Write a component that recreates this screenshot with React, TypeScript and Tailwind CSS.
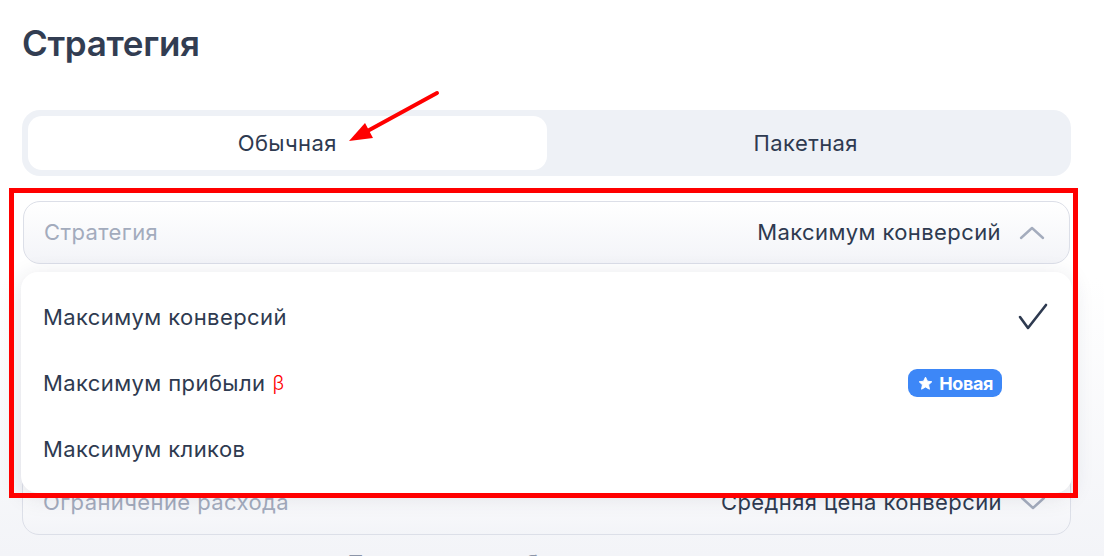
import React from "react";

const font = { fontFamily: "Inter, 'Noto Sans', sans-serif" };

function ChevronUp({ down = false }: { down?: boolean }) {
  return (
    <svg width="26" height="14" viewBox="0 0 26 14" fill="none" stroke="#a4acbd" strokeWidth="2.4" strokeLinecap="round" strokeLinejoin="round">
      {down ? <polyline points="2,2 13,12 24,2" /> : <polyline points="2,12 13,2 24,12" />}
    </svg>
  );
}

function Check() {
  return (
    <svg width="30" height="28" viewBox="0 0 30 28" fill="none" stroke="#2e3a50" strokeWidth="2.6" strokeLinecap="round" strokeLinejoin="round">
      <polyline points="2,14 10,25 28,2" />
    </svg>
  );
}

function Badge() {
  return (
    <span className="flex items-center gap-[6px] h-[28px] pl-[10px] pr-[9px] rounded-[9px] bg-[#3d87f7] text-white text-[18px] font-bold tracking-[-0.4px]">
      <svg width="15" height="15" viewBox="0 0 24 24" fill="white">
        <path d="M12 1.8l3.1 6.5 7 .9-5.2 4.9 1.4 7-6.3-3.5-6.3 3.5 1.4-7L1.9 9.2l7-.9z" strokeLinejoin="round" stroke="white" strokeWidth="1.5" />
      </svg>
      Новая
    </span>
  );
}

const items = [
  { label: "Максимум конверсий", checked: true },
  { label: "Максимум прибыли", beta: true, badge: true },
  { label: "Максимум кликов" },
];

export default function App() {
  return (
    <div
      className="relative w-[1104px] h-[556px] overflow-hidden bg-gradient-to-b from-white via-white to-[#f3f4f8] text-[#2e3a50]"
      style={font}
    >
      <div className="px-[22px] pt-[22px]">
        {/* Title */}
        <h1 className="text-[35px] leading-[42px] font-semibold text-[#323d52] tracking-[-0.3px]">Стратегия</h1>

        {/* Segmented */}
        <div className="mt-[46px] w-[1049px] h-[66px] p-[6px] rounded-[18px] bg-[#eef1f6] flex text-[22px] tracking-[0.4px]">
          <div className="flex-1 rounded-[14px] bg-white flex items-center justify-center">Обычная</div>
          <div className="flex-1 flex items-center justify-center">Пакетная</div>
        </div>

        {/* Fields */}
        <div className="relative mt-[25px] w-[1049px] flex flex-col text-[22px] tracking-[0.4px]">
          <div className="h-[63px] mx-[1px] rounded-[17px] border border-[#dcdfe8] bg-gradient-to-b from-white to-[#f3f4f8] flex items-center pl-[20px] pr-[24px]">
            <span className="text-[#a3abbd]">Стратегия</span>
            <span className="ml-auto mr-[18px]">Максимум конверсий</span>
            <ChevronUp />
          </div>

          <div className="mt-[206px] h-[65px] rounded-[17px] border border-[#dcdfe8] bg-gradient-to-b from-white to-[#f3f4f8] flex items-center pl-[20px] pr-[24px]">
            <span className="text-[#a3abbd]">Ограничение расхода</span>
            <span className="ml-auto mr-[18px]">Средняя цена конверсии</span>
            <ChevronUp down />
          </div>

          <div className="mt-[12px] text-center text-[#8c95a8]">
            Прогноз на все бюджеты кампании
          </div>

          {/* Dropdown */}
          <div className="absolute left-[-1px] right-[-1px] top-[71px] h-[221px] rounded-[17px] bg-white shadow-[0_4px_22px_rgba(40,50,80,0.13)] pt-[12px] flex flex-col">
            {items.map((it) => (
              <div key={it.label} className="h-[66px] shrink-0 flex items-center pl-[22px] pr-[24px]">
                <span>{it.label}</span>
                {it.beta && <span className="ml-[7px] text-[#f00] text-[20px] font-light">β</span>}
                <span className="ml-auto flex items-center gap-[16px]">
                  {it.badge && <Badge />}
                  <span className="w-[30px] flex justify-center">{it.checked && <Check />}</span>
                </span>
              </div>
            ))}
          </div>
        </div>
      </div>

      {/* Annotations */}
      <div className="absolute left-[9px] top-[188px] w-[1069px] h-[310px] border-[5px] border-[#ff0000]" />
      <svg className="absolute left-0 top-0" width="1104" height="556" fill="none">
        <line x1="437" y1="93" x2="362" y2="134" stroke="#ff0000" strokeWidth="4" strokeLinecap="round" />
        <polygon points="349,141 365,123 373,138" fill="#ff0000" />
      </svg>
    </div>
  );
}
